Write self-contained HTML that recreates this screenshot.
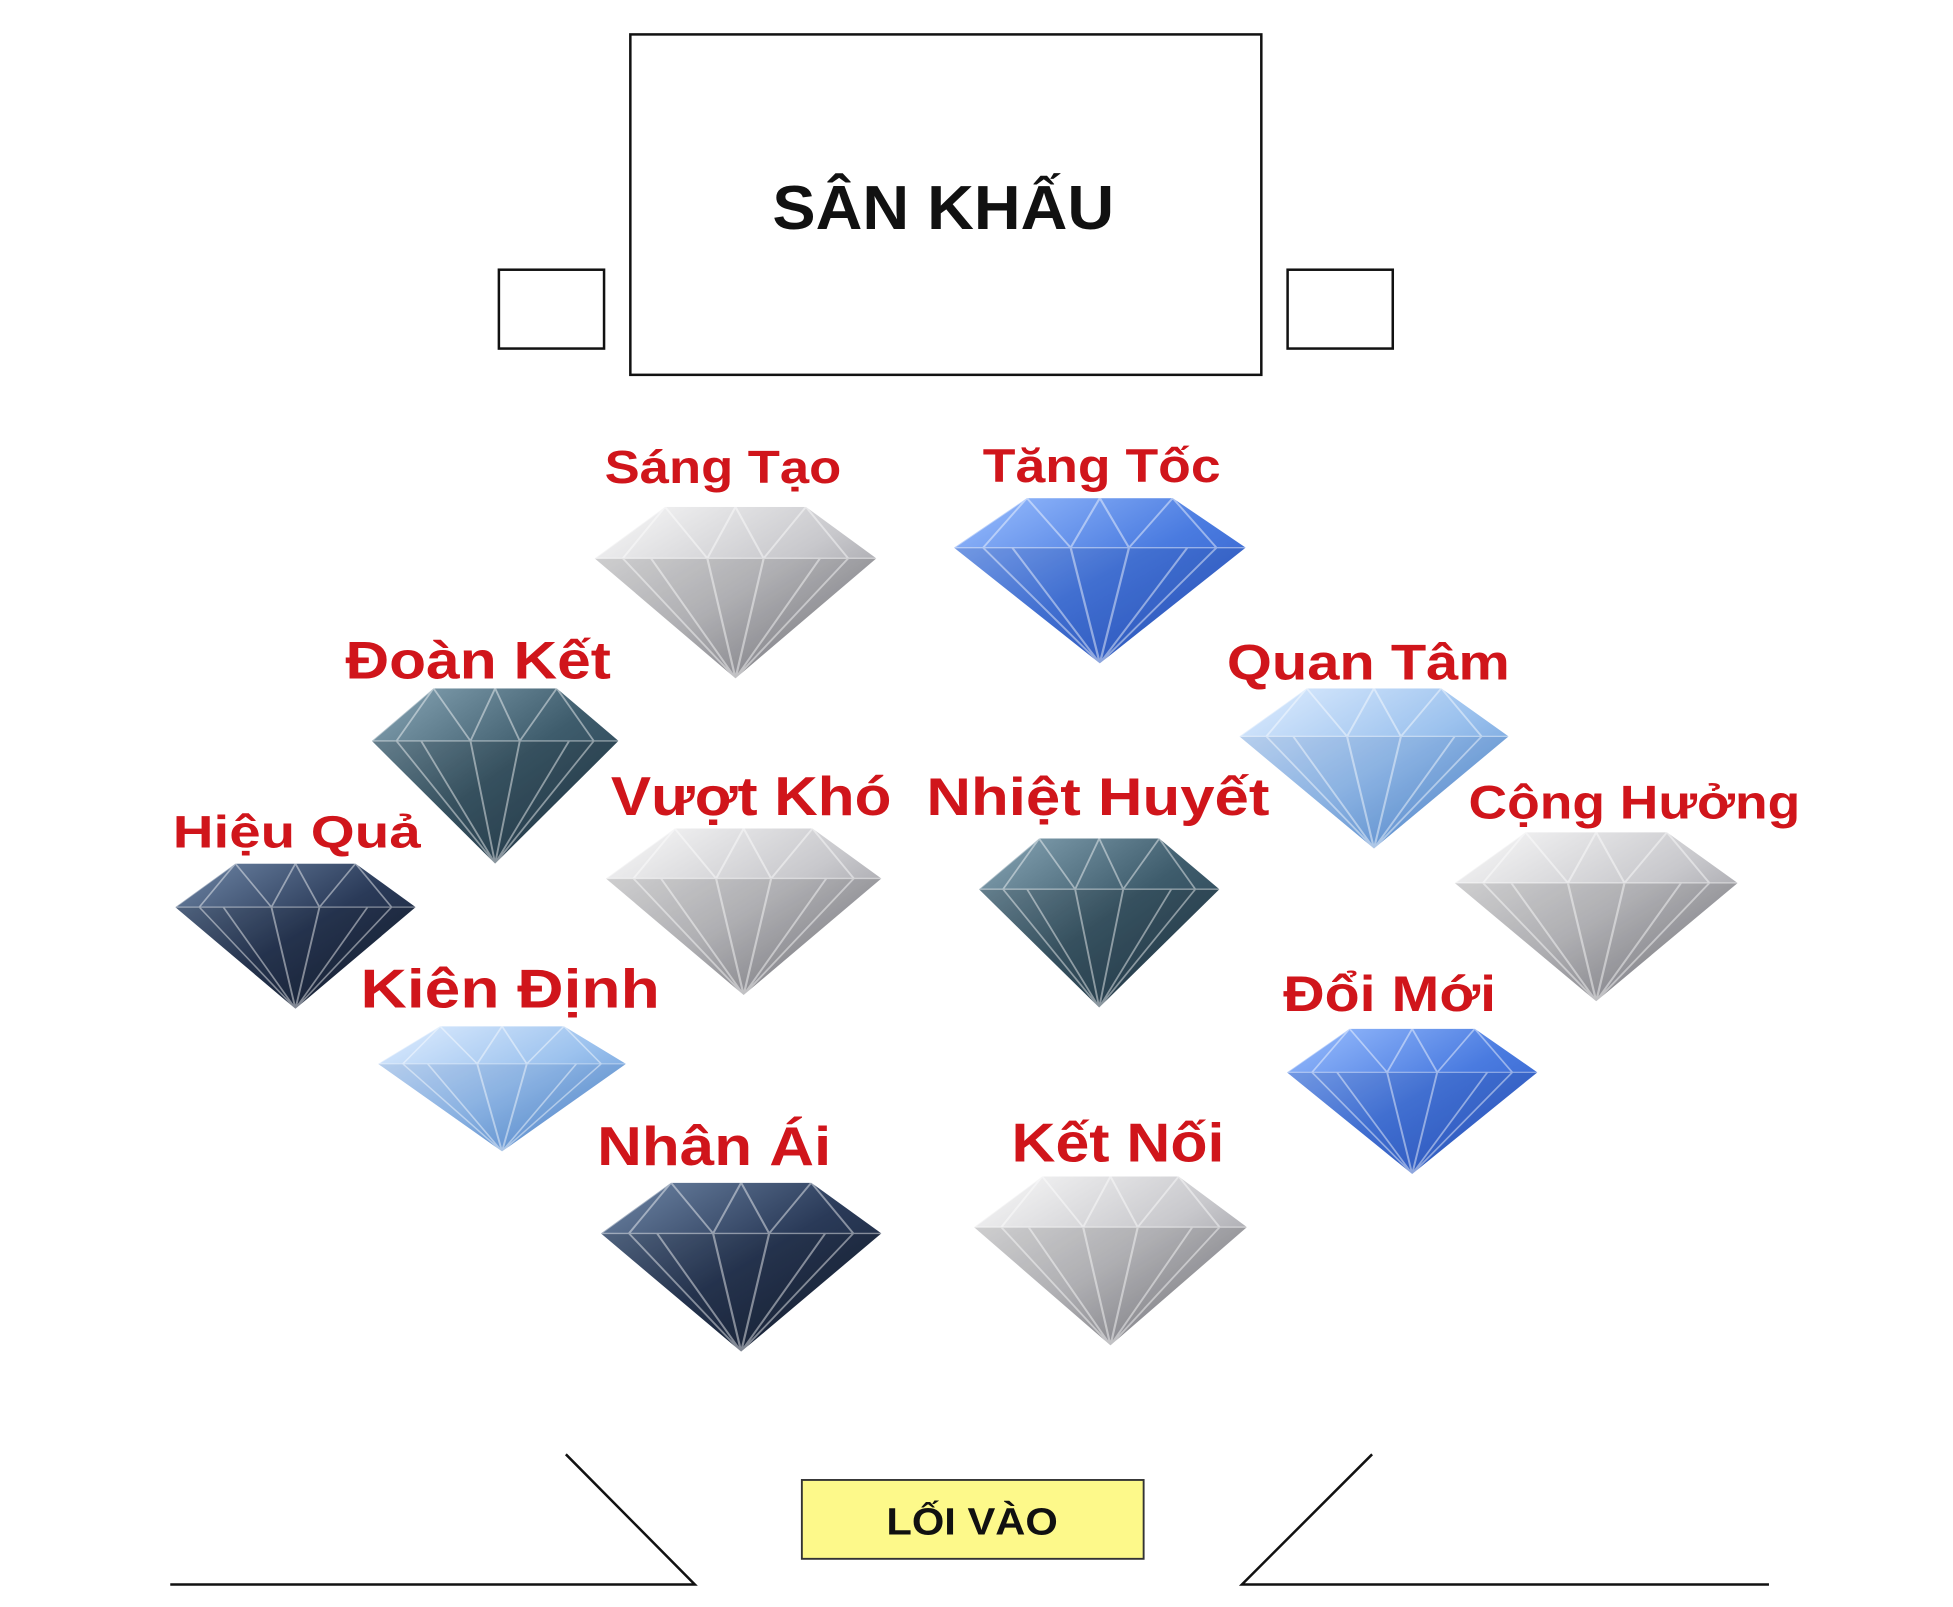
<!DOCTYPE html>
<html><head><meta charset="utf-8"><style>
html,body{margin:0;padding:0;background:#fff;}
svg{display:block}
text{font-family:"Liberation Sans",sans-serif;font-weight:bold}
.l{fill:#d0151b;text-anchor:start}
</style></head><body>
<svg width="1953" height="1607" viewBox="0 0 1560 1284" preserveAspectRatio="none" xmlns="http://www.w3.org/2000/svg">
<defs>
<linearGradient id="gw" x1="0" y1="0" x2="1" y2="1"><stop offset="0" stop-color="#fafafa"/><stop offset=".5" stop-color="#c8c8cc"/><stop offset="1" stop-color="#7c7c84"/></linearGradient>
<linearGradient id="gb" x1="0" y1="0" x2="1" y2="1"><stop offset="0" stop-color="#9cc0ff"/><stop offset=".5" stop-color="#4a7be0"/><stop offset="1" stop-color="#2a55c0"/></linearGradient>
<linearGradient id="gt" x1="0" y1="0" x2="1" y2="1"><stop offset="0" stop-color="#8aa8b8"/><stop offset=".5" stop-color="#3e5c6c"/><stop offset="1" stop-color="#22394a"/></linearGradient>
<linearGradient id="gn" x1="0" y1="0" x2="1" y2="1"><stop offset="0" stop-color="#7088a8"/><stop offset=".5" stop-color="#2a3a58"/><stop offset="1" stop-color="#141e30"/></linearGradient>
<linearGradient id="gl" x1="0" y1="0" x2="1" y2="1"><stop offset="0" stop-color="#e0eeff"/><stop offset=".5" stop-color="#9cc2ee"/><stop offset="1" stop-color="#4e86cc"/></linearGradient>
<g id="facets" fill="none" stroke="#fff" stroke-opacity=".45" stroke-width=".8">
<path d="M25 0 L10 30 L50 100 L90 30 L75 0 M25 0 L40 30 L50 0 L60 30 L75 0 M0 30 L25 0 M40 30 L50 100 L60 30 M20 30 L50 100 L80 30 M0 30 L100 30"/>
</g>
<symbol id="dw" viewBox="0 0 100 100" preserveAspectRatio="none"><polygon points="25,0 75,0 100,30 50,100 0,30" fill="url(#gw)"/><polygon points="0,30 100,30 50,100" fill="#000" opacity=".12"/><use href="#facets"/></symbol>
<symbol id="db" viewBox="0 0 100 100" preserveAspectRatio="none"><polygon points="25,0 75,0 100,30 50,100 0,30" fill="url(#gb)"/><polygon points="0,30 100,30 50,100" fill="#001a60" opacity=".12"/><use href="#facets"/></symbol>
<symbol id="dt" viewBox="0 0 100 100" preserveAspectRatio="none"><polygon points="25,0 75,0 100,30 50,100 0,30" fill="url(#gt)"/><polygon points="0,30 100,30 50,100" fill="#000" opacity=".12"/><use href="#facets"/></symbol>
<symbol id="dn" viewBox="0 0 100 100" preserveAspectRatio="none"><polygon points="25,0 75,0 100,30 50,100 0,30" fill="url(#gn)"/><polygon points="0,30 100,30 50,100" fill="#000" opacity=".12"/><use href="#facets"/></symbol>
<symbol id="dl" viewBox="0 0 100 100" preserveAspectRatio="none"><polygon points="25,0 75,0 100,30 50,100 0,30" fill="url(#gl)"/><polygon points="0,30 100,30 50,100" fill="#003080" opacity=".1"/><use href="#facets"/></symbol>
</defs>

<rect x="503.5" y="27.5" width="504" height="272" fill="none" stroke="#111" stroke-width="2"/>
<rect x="398.5" y="215.5" width="84" height="63" fill="none" stroke="#111" stroke-width="2"/>
<rect x="1028.5" y="215.5" width="84" height="63" fill="none" stroke="#111" stroke-width="2"/>
<text x="617" y="183" font-size="50" textLength="273" lengthAdjust="spacingAndGlyphs" fill="#111">SÂN KHẤU</text>

<use href="#dw" x="475" y="405" width="225" height="137"/>
<use href="#db" x="762" y="398" width="233" height="132"/>
<use href="#dt" x="297" y="550" width="197" height="140"/>
<use href="#dl" x="990" y="550" width="215" height="128"/>
<use href="#dn" x="140" y="690" width="192" height="116"/>
<use href="#dw" x="484" y="662" width="220" height="133"/>
<use href="#dt" x="782" y="670" width="192" height="135"/>
<use href="#dw" x="1162" y="665" width="226" height="135"/>
<use href="#dl" x="302" y="820" width="198" height="100"/>
<use href="#db" x="1028" y="822" width="200" height="116"/>
<use href="#dn" x="480" y="945" width="224" height="135"/>
<use href="#dw" x="778" y="940" width="218" height="135"/>

<text class="l" x="483" y="386" font-size="37" textLength="189" lengthAdjust="spacingAndGlyphs">Sáng Tạo</text>
<text class="l" x="785" y="385" font-size="38" textLength="190" lengthAdjust="spacingAndGlyphs">Tăng Tốc</text>
<text class="l" x="276" y="542" font-size="42" textLength="212" lengthAdjust="spacingAndGlyphs">Đoàn Kết</text>
<text class="l" x="980" y="543" font-size="40" textLength="226" lengthAdjust="spacingAndGlyphs">Quan Tâm</text>
<text class="l" x="488" y="651" font-size="44" textLength="224" lengthAdjust="spacingAndGlyphs">Vượt Khó</text>
<text class="l" x="740" y="651" font-size="42" textLength="274" lengthAdjust="spacingAndGlyphs">Nhiệt Huyết</text>
<text class="l" x="1173" y="654" font-size="38" textLength="265" lengthAdjust="spacingAndGlyphs">Cộng Hưởng</text>
<text class="l" x="138" y="677" font-size="36" textLength="198" lengthAdjust="spacingAndGlyphs">Hiệu Quả</text>
<text class="l" x="288" y="805" font-size="44" textLength="239" lengthAdjust="spacingAndGlyphs">Kiên Định</text>
<text class="l" x="1025" y="808" font-size="40" textLength="170" lengthAdjust="spacingAndGlyphs">Đổi Mới</text>
<text class="l" x="477" y="931" font-size="44" textLength="187" lengthAdjust="spacingAndGlyphs">Nhân Ái</text>
<text class="l" x="808" y="928" font-size="44" textLength="170" lengthAdjust="spacingAndGlyphs">Kết Nối</text>

<rect x="640.5" y="1182.5" width="273" height="63" fill="#fdf98a" stroke="#333" stroke-width="1.5"/>
<text x="708" y="1226" font-size="30" textLength="137" lengthAdjust="spacingAndGlyphs" fill="#111">LỐI VÀO</text>

<g stroke="#111" stroke-width="2" fill="none">
<path d="M136 1266 H555 L452 1162"/>
<path d="M1413 1266 H992 L1096 1162"/>
</g>
</svg>
</body></html>
